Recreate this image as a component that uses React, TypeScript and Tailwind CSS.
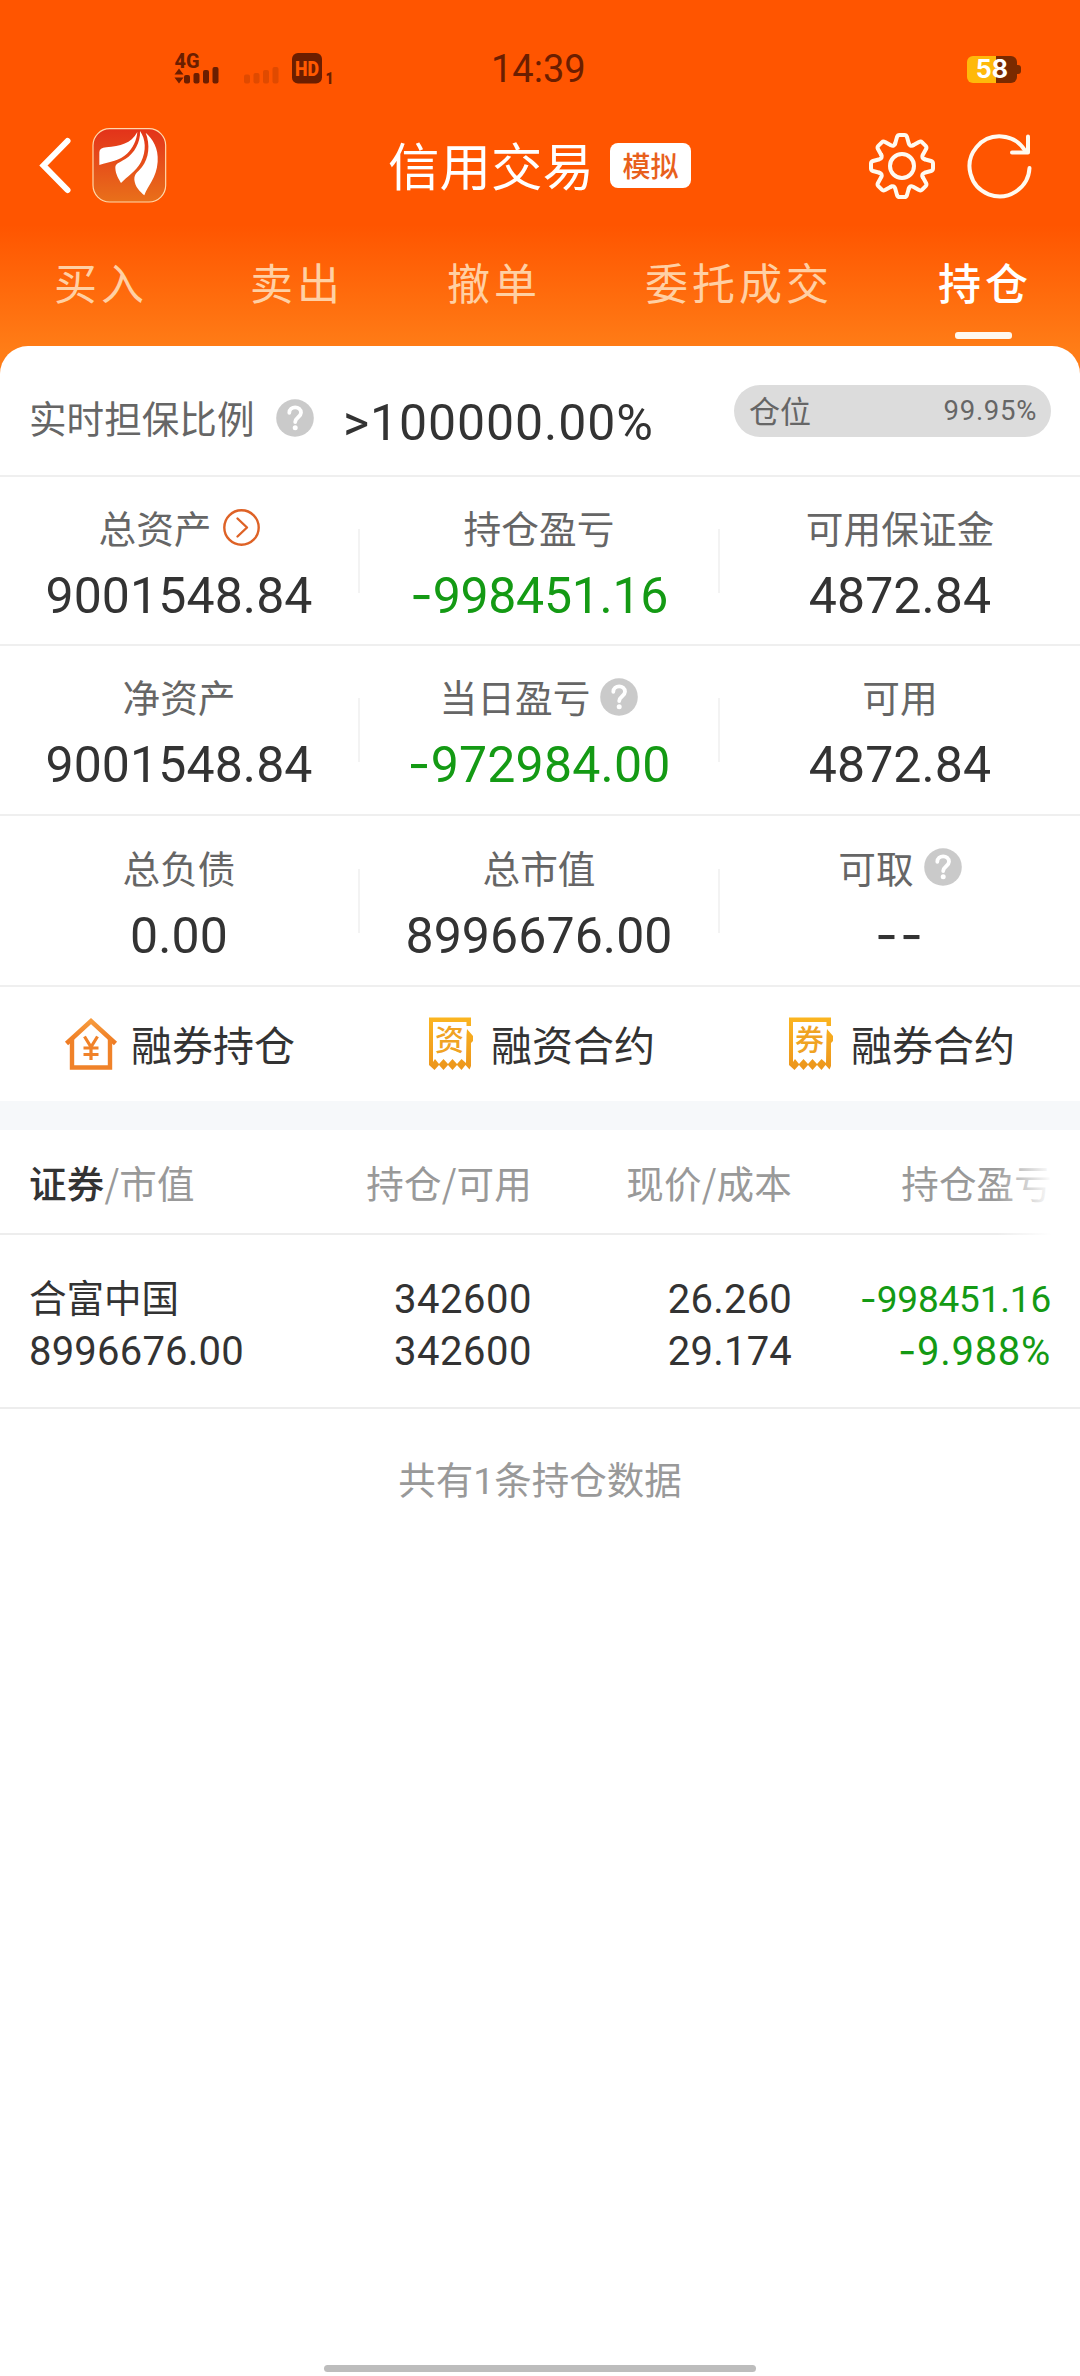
import React from 'react';

const CJK = "font-['Noto_Sans_CJK_SC',sans-serif]";
const NUM = "font-['Roboto','Noto_Sans_CJK_SC',sans-serif]";

function StatusBar() {
  return (
    <div className="flex h-[120px] w-full items-start">
      <svg className="ml-[170px] mt-[48px] h-[40px] w-[170px]" viewBox="0 0 170 40" fill="#6b1e00">
        <text x="4.5" y="20" fontSize="21" fontWeight="800" fontFamily="Roboto" textLength="25" lengthAdjust="spacingAndGlyphs">4G</text>
        <path d="M4.5 26.5 L9 20.5 L13.5 26.5Z M4.5 29.5 L9 35.5 L13.5 29.5Z" />
        <rect x="14" y="27" width="6" height="8.500" rx="2" />
        <rect x="23.500" y="25" width="6" height="10.500" rx="2" />
        <rect x="33" y="22" width="6" height="13.500" rx="2" />
        <rect x="42.500" y="19" width="6" height="16.500" rx="2" />
        <g fill="#e04a00">
          <rect x="74" y="26.500" width="6" height="9" rx="2" />
          <rect x="83.500" y="25" width="6" height="10.500" rx="2" />
          <rect x="93" y="22" width="6" height="13.500" rx="2" />
          <rect x="102.500" y="19" width="6" height="16.500" rx="2" />
        </g>
        <rect x="122" y="5" width="30" height="30.500" rx="6" />
        <text x="125" y="27.500" fontSize="20" fontWeight="900" fontFamily="Roboto" fill="#ff5a00" textLength="24" lengthAdjust="spacingAndGlyphs">HD</text>
        <text x="155.500" y="35.500" fontSize="16" fontWeight="900" fontFamily="Roboto" textLength="8" lengthAdjust="spacingAndGlyphs">1</text>
      </svg>
      <div className={`ml-[151px] mt-[45px] h-[48px] w-[100px] whitespace-nowrap text-[38px] leading-[49px] tracking-[0px] text-[#6b1e00] ${NUM}`}>14:39</div>
      <div className="ml-[376px] mt-[56px] flex h-[27px] w-[50px] items-center justify-center rounded-[6px] bg-[linear-gradient(90deg,#ffb90a_0_58%,#7a2a00_58%)]">
        <span className="font-['Inter'] text-[25px] font-bold leading-[27px] text-white">58</span>
      </div>
      <div className="mt-[65px] h-[9px] w-[4px] rounded-r-[3px] bg-[#7a2a00]" />
    </div>
  );
}

function Gear() {
  return (
    <svg className="h-[70px] w-[70px]" viewBox="-35 -35 70 70" fill="none" stroke="#fffaf0" strokeWidth="4" strokeLinecap="round" strokeLinejoin="round">
      {[0, 45, 90, 135, 180, 225, 270, 315].map((a) => (
        <path
          key={a}
          transform={`rotate(${a})`}
          d="M-6.8 -22.500 L-5 -29 Q-4.300 -31 -2.500 -31 H2.500 Q4.300 -31 5 -29 L6.800 -22.500 Q8 -19.200 11.100 -20.720"
        />
      ))}
      <circle r="12" />
    </svg>
  );
}

function TitleBar() {
  return (
    <div className="flex h-[104px] w-full items-center pb-[12px]">
      <svg className="ml-[38px] h-[60px] w-[34px]" viewBox="0 0 34 60" fill="none" stroke="#fff" strokeWidth="6" strokeLinecap="round" strokeLinejoin="miter">
        <path d="M29.500 5 L5.500 29.500 L29.500 54" />
      </svg>
      <svg className="ml-[20px] mt-[-2px] h-[77px] w-[75px]" viewBox="0 0 225 231">
        <defs>
          <linearGradient id="logoFill" x1="0" y1="0" x2="0" y2="1">
            <stop offset="0" stopColor="#e3321a" />
            <stop offset="1" stopColor="#e9701a" />
          </linearGradient>
        </defs>
        <rect x="3" y="5" width="218" height="220" rx="50" fill="url(#logoFill)" stroke="#ffd9ac" strokeWidth="3.500" />
        <g fill="#fff" transform="translate(-5 1)">
          <path d="M141 14 C122 50 90 55 48 60 Q27 61 27 75 V113 C60 102 88 100 110 79 C128 62 139 38 141 14Z" />
          <path d="M149 11 C151 45 132 78 105 95 C86 107 74 108 75 123 C76 142 85 155 92 167 C110 148 138 132 152 104 C169 70 166 35 149 11Z" />
          <path d="M166 16 C180 52 176 92 155 119 C140 138 132 138 132 157 C134 179 149 192 162 204 C172 175 199 151 202 103 C205 62 187 35 166 16Z" />
        </g>
      </svg>
      <div className={`ml-[221px] mt-[-4px] w-[206px] whitespace-nowrap text-[51.5px] leading-[60px] text-white ${CJK}`}>信用交易</div>
      <div className={`ml-[16px] mt-[-1px] flex h-[45px] w-[81px] items-center justify-center rounded-[8px] bg-white pb-[2px] text-[28px] font-medium leading-[40px] text-[#e8601c] ${CJK}`}>模拟</div>
      <div className="ml-[176px]"><Gear /></div>
      <svg className="ml-[29px] h-[70px] w-[70px]" viewBox="0 0 70 70" fill="none" stroke="#fffaf0" strokeWidth="4" strokeLinecap="round" strokeLinejoin="round">
        <path d="M63.500 37 A30 30 0 1 1 59 19.500" />
        <path d="M62 5.500 V21.500 H46" />
      </svg>
    </div>
  );
}

function Tabs() {
  const tabs = [
    ['买入', 'ml-[54px] w-[196px]'],
    ['卖出', 'w-[197px]'],
    ['撤单', 'w-[198px]'],
    ['委托成交', 'w-[291px]'],
  ];
  return (
    <div className={`flex h-[122px] w-full whitespace-nowrap pt-[27px] text-[43px] leading-[60px] tracking-[4px] text-[#ffd0a4] ${CJK}`}>
      {tabs.map(([t, c]) => (
        <div key={t} className={c}>{t}</div>
      ))}
      <div className="flex w-[94px] flex-col items-center font-medium text-white">
        <span className="-mr-[4px]">持仓</span>
        <span className="mt-[21px] h-[7px] w-[57px] rounded-[3px] bg-[#fff8ee]" />
      </div>
    </div>
  );
}

function Help({ className = '' }: { className?: string }) {
  return (
    <svg className={`h-[38px] w-[38px] shrink-0 ${className}`} viewBox="0 0 38 38">
      <circle cx="19" cy="19" r="18.800" fill="#cacaca" />
      <path d="M13.300 13.800 C13.300 6.500 25 6.500 25 13.800 C25 18 19.200 18.500 19.200 23" fill="none" stroke="#fff" strokeWidth="3.800" strokeLinecap="round" />
      <circle cx="19.200" cy="28.800" r="2.500" fill="#fff" />
    </svg>
  );
}

function ArrowCircle({ className = '' }: { className?: string }) {
  return (
    <svg className={`h-[37px] w-[37px] shrink-0 ${className}`} viewBox="0 0 37 37" fill="none" stroke="#de6226" strokeWidth="2.400" strokeLinecap="round" strokeLinejoin="round">
      <circle cx="18.500" cy="18.500" r="17.200" />
      <path d="M14.500 9.500 L24 18.500 L14.500 27.500" />
    </svg>
  );
}

/* A leading minus is set in a font with a wider, higher dash. */
function Amount({ children }: { children: string }) {
  if (!children.startsWith('-')) return <>{children}</>;
  return (
    <>
      <span className="font-['Inter'] leading-none">-</span>
      {children.slice(1)}
    </>
  );
}

type Cell = { label: string; value: React.ReactNode; icon?: React.ReactNode; tone?: string };

const rows: { height: string; cells: Cell[] }[] = [
  {
    height: 'h-[169px]',
    cells: [
      { label: '总资产', value: '9001548.84', icon: <ArrowCircle className="ml-[11px] mt-[2px]" /> },
      { label: '持仓盈亏', value: <Amount>-998451.16</Amount>, tone: 'text-[#149a14] tracking-[-0.3px]' },
      { label: '可用保证金', value: '4872.84' },
    ],
  },
  {
    height: 'h-[170px]',
    cells: [
      { label: '净资产', value: '9001548.84' },
      { label: '当日盈亏', value: <Amount>-972984.00</Amount>, icon: <Help className="ml-[10px] mt-[2px]" />, tone: 'text-[#149a14] tracking-[0.2px]' },
      { label: '可用', value: '4872.84' },
    ],
  },
  {
    height: 'h-[171px]',
    cells: [
      { label: '总负债', value: '0.00' },
      { label: '总市值', value: '8996676.00' },
      {
        label: '可取',
        value: <span className="font-['Inter'] leading-none tracking-[2px]">--</span>,
        icon: <Help className="ml-[10px]" />,
      },
    ],
  },
];

function Summary() {
  return (
    <>
      {rows.map((r, i) => (
        <div key={i} className={`flex items-center border-b-2 border-[#efefef] ${r.height}`}>
          {r.cells.map((c, j) => (
            <div key={j} className="flex w-[360px] items-center">
              <div className="flex h-[126px] flex-1 flex-col items-center pt-px">
                <div className={`flex h-[56px] items-center text-[37.7px] leading-[56px] text-[#666] ${CJK}`}>
                  {c.label}
                  {c.icon}
                </div>
                <div className={`mt-[8px] whitespace-nowrap text-[50px] leading-[66px] ${NUM} ${c.tone ?? 'tracking-[0.1px] text-[#333]'}`}>{c.value}</div>
              </div>
              {j < 2 && <div className="h-[64px] w-[2px] bg-[#f3f3f3]" />}
            </div>
          ))}
        </div>
      ))}
    </>
  );
}

function HouseIcon() {
  return (
    <svg className="h-[56px] w-[56px]" viewBox="0 0 56 56" fill="none">
      <defs>
        <linearGradient id="house" x1="0" y1="0" x2="0" y2="1">
          <stop offset="0" stopColor="#f79a3c" />
          <stop offset="1" stopColor="#ee7a22" />
        </linearGradient>
      </defs>
      <path d="M3.500 27.500 L28 5 L52.500 27.500" stroke="url(#house)" strokeWidth="4.600" />
      <path d="M9 23 V51.500 H47 V23" stroke="#f08229" strokeWidth="4.400" />
      <path d="M21.500 20.500 L28 31 L34.500 20.500 M28 31 V44 M20.500 32 H35.500 M20.500 38.500 H35.500" stroke="#f08229" strokeWidth="3.200" />
    </svg>
  );
}

function ReceiptIcon({ char }: { char: string }) {
  return (
    <svg className="h-[56px] w-[56px]" viewBox="0 0 56 56">
      <defs>
        <linearGradient id="receipt" x1="0" y1="0" x2="0" y2="1">
          <stop offset="0" stopColor="#fbb520" />
          <stop offset="1" stopColor="#ec951c" />
        </linearGradient>
      </defs>
      <path
        d="M6 1.500 H48 V10 H43.500 V6 H10 V46 L12 43 L16 48 L20.500 43 L25 48 L29.500 43 L34 48 L38.500 43 L43 47 L43.500 19 L44 13 L50 20 V25 L48 27 V50 L46.500 53.500 L42.500 49 L38.500 54 L34 49 L29.500 54 L25 49 L20.500 54 L16 49 L11.500 54 L6 49Z"
        fill="url(#receipt)"
      />
      <text x="26.500" y="34.500" textAnchor="middle" fontSize="29" fontWeight="500" fontFamily="Noto Sans CJK SC" fill="#f0a323">{char}</text>
    </svg>
  );
}

function Actions() {
  const items = [
    { icon: <HouseIcon />, label: '融券持仓' },
    { icon: <ReceiptIcon char="资" />, label: '融资合约' },
    { icon: <ReceiptIcon char="券" />, label: '融券合约' },
  ];
  return (
    <div className={`flex h-[114px] text-[41px] leading-[60px] text-[#333] ${CJK}`}>
      {items.map((it) => (
        <div key={it.label} className="flex w-[360px] items-center pl-[63px]">
          {it.icon}
          <span className="mt-[-2px] ml-[12px]">{it.label}</span>
        </div>
      ))}
    </div>
  );
}

function Holdings() {
  return (
    <>
      <div className={`relative flex h-[105px] items-center border-b-2 border-[#ededed] pl-[29px] text-[37.5px] leading-[56px] tracking-[0.2px] text-[#999] ${CJK}`}>
        <div className="w-[263px]"><span className="font-medium text-[#333]">证券</span>/市值</div>
        <div className="w-[240px] text-right">持仓/可用</div>
        <div className="w-[260px] text-right">现价/成本</div>
        <div className="w-[260px] text-right">持仓盈亏</div>
        <div className="absolute -bottom-[2px] right-[28px] top-0 w-[56px] bg-gradient-to-r from-white/0 to-white" />
        <div className="absolute -bottom-[2px] right-0 top-0 w-[28px] bg-white" />
      </div>
      <div className={`flex h-[174px] whitespace-nowrap border-b-2 border-[#ededed] pl-[29px] pt-[39px] text-[40px] leading-[52px] text-[#333] ${NUM}`}>
        <div className="w-[263px]">
          <div className="-mt-px h-[53px] text-[37.5px]">合富中国</div>
          <div className="tracking-[0.2px]">8996676.00</div>
        </div>
        <div className="w-[240px] text-right tracking-[0.5px]">
          <div>342600</div>
          <div>342600</div>
        </div>
        <div className="w-[260px] text-right tracking-[0.2px]">
          <div>26.260</div>
          <div>29.174</div>
        </div>
        <div className="w-[259px] text-right text-[#149a14]">
          <div className="text-[37px] tracking-[-0.2px]"><Amount>-998451.16</Amount></div>
          <div className="tracking-[0.7px]"><Amount>-9.988%</Amount></div>
        </div>
      </div>
      <div className={`mt-[41px] text-center text-[37.5px] leading-[56px] text-[#999] ${CJK}`}>共有<span className="font-['Roboto'] leading-none">1</span>条持仓数据</div>
    </>
  );
}

export default function App() {
  return (
    <div className="flex h-[2376px] w-[1080px] flex-col overflow-hidden bg-white">
      <div className="h-[376px] shrink-0 bg-[linear-gradient(180deg,#ff5500_0px,#ff5500_225px,#ff7d17_350px,#ff7d17_376px)]">
        <StatusBar />
        <TitleBar />
        <Tabs />
      </div>
      <div className="-mt-[30px] flex-1 rounded-t-[28px] bg-white">
        <div className="flex h-[131px] items-start border-b-2 border-[#efefef]">
          <div className={`ml-[29px] mt-[43px] w-[226px] whitespace-nowrap text-[37.6px] leading-[56px] text-[#666] ${CJK}`}>实时担保比例</div>
          <Help className="ml-[21px] mt-[53px]" />
          <div className={`ml-[29px] mt-[44px] w-[380px] text-[50px] leading-[66px] tracking-[0.9px] text-[#333] ${NUM}`}>&gt;100000.00%</div>
          <div className="ml-[11px] mt-[39px] flex h-[52px] w-[317px] items-center justify-between rounded-full bg-[#dcdcdc] pl-[15px] pr-[14px] text-[#666]">
            <span className={`pb-[2px] text-[31px] leading-[44px] ${CJK}`}>仓位</span>
            <span className={`text-[27.5px] leading-[44px] tracking-[0.7px] ${NUM}`}>99.95%</span>
          </div>
        </div>
        <Summary />
        <Actions />
        <div className="h-[29px] bg-[#f6f8fa]" />
        <Holdings />
      </div>
      <div className="mx-auto mb-[4px] h-[7px] w-[432px] shrink-0 rounded-full bg-[#bdbdbd]" />
    </div>
  );
}
